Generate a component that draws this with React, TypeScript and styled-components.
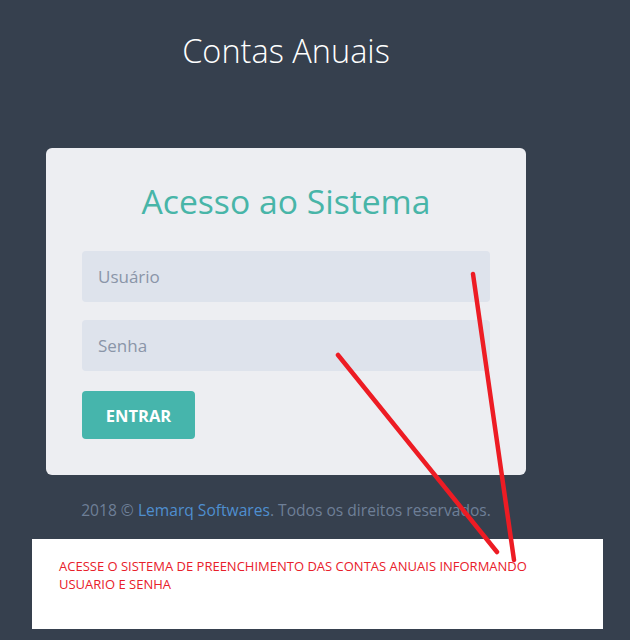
import styled, { createGlobalStyle } from "styled-components";

const GlobalStyle = createGlobalStyle`
  html, body {
    margin: 0;
    padding: 0;
    background: #36404e;
  }
  body {
    font-family: "Open Sans", "Liberation Sans", sans-serif;
  }
`;

const Page = styled.div`
  position: relative;
  width: 630px;
  height: 640px;
  overflow: hidden;
  background: #36404e;
`;

const Column = styled.div`
  width: 480px;
  margin-left: 46px;
  display: flex;
  flex-direction: column;
  align-items: stretch;
`;

const AppTitle = styled.h1`
  margin: 0;
  padding-top: 30px;
  height: 148px;
  box-sizing: border-box;
  text-align: center;
  color: #ffffff;
  font-size: 32.5px;
  font-weight: 300;
  line-height: 42px;
`;

const Card = styled.div`
  background: #edeef2;
  border-radius: 6px;
  padding: 29px 36px 36px 36px;
  height: 327px;
  box-sizing: border-box;
  display: flex;
  flex-direction: column;
`;

const CardTitle = styled.h2`
  margin: 0 0 26px 0;
  text-align: center;
  color: #48b5a8;
  font-size: 33.7px;
  font-weight: 400;
  line-height: 48px;
`;

const Field = styled.input`
  height: 51px;
  border: none;
  border-radius: 4px;
  background: #dee3ec;
  padding: 0 16px;
  margin-bottom: 18px;
  font-family: "Open Sans", sans-serif;
  font-size: 17px;
  color: #4a5568;
  outline: none;

  &::placeholder {
    color: #8a95a8;
  }
`;

const SubmitButton = styled.button`
  align-self: flex-start;
  width: 113px;
  height: 48px;
  margin-top: 2px;
  border: none;
  border-radius: 4px;
  background: #46b5ac;
  color: #ffffff;
  font-family: "Open Sans", sans-serif;
  font-size: 16.5px;
  font-weight: 700;
  cursor: pointer;
`;

const Footer = styled.p`
  margin: 0;
  padding-top: 24px;
  height: 64px;
  box-sizing: border-box;
  text-align: center;
  color: #6e7f97;
  font-size: 15.6px;
  line-height: 22px;

  a {
    color: #4f8fd0;
    text-decoration: none;
  }
`;

const NoteBox = styled.div`
  margin-left: 32px;
  width: 571px;
  height: 90px;
  box-sizing: border-box;
  background: #ffffff;
  padding: 18px 27px;
  color: #e8202a;
  font-family: "Open Sans", "Liberation Sans", sans-serif;
  font-size: 13px;
  line-height: 18px;
`;

const Overlay = styled.svg`
  position: absolute;
  left: 0;
  top: 0;
  pointer-events: none;
`;

export default function App() {
  return (
    <Page>
      <GlobalStyle />
      <Column>
        <AppTitle>Contas Anuais</AppTitle>
        <Card>
          <CardTitle>Acesso ao Sistema</CardTitle>
          <Field placeholder="Usuário" />
          <Field placeholder="Senha" type="password" />
          <SubmitButton>ENTRAR</SubmitButton>
        </Card>
        <Footer>
          2018 © <a href="#">Lemarq Softwares</a>. Todos os direitos reservados.
        </Footer>
      </Column>
      <NoteBox>
        ACESSE O SISTEMA DE PREENCHIMENTO DAS CONTAS ANUAIS INFORMANDO
        <br />
        USUARIO E SENHA
      </NoteBox>
      <Overlay width="630" height="640" viewBox="0 0 630 640">
        <line x1="473" y1="274" x2="514" y2="560" stroke="#ed1c24" strokeWidth="4.5" strokeLinecap="round" />
        <line x1="338" y1="355" x2="497" y2="552" stroke="#ed1c24" strokeWidth="4.5" strokeLinecap="round" />
      </Overlay>
    </Page>
  );
}
